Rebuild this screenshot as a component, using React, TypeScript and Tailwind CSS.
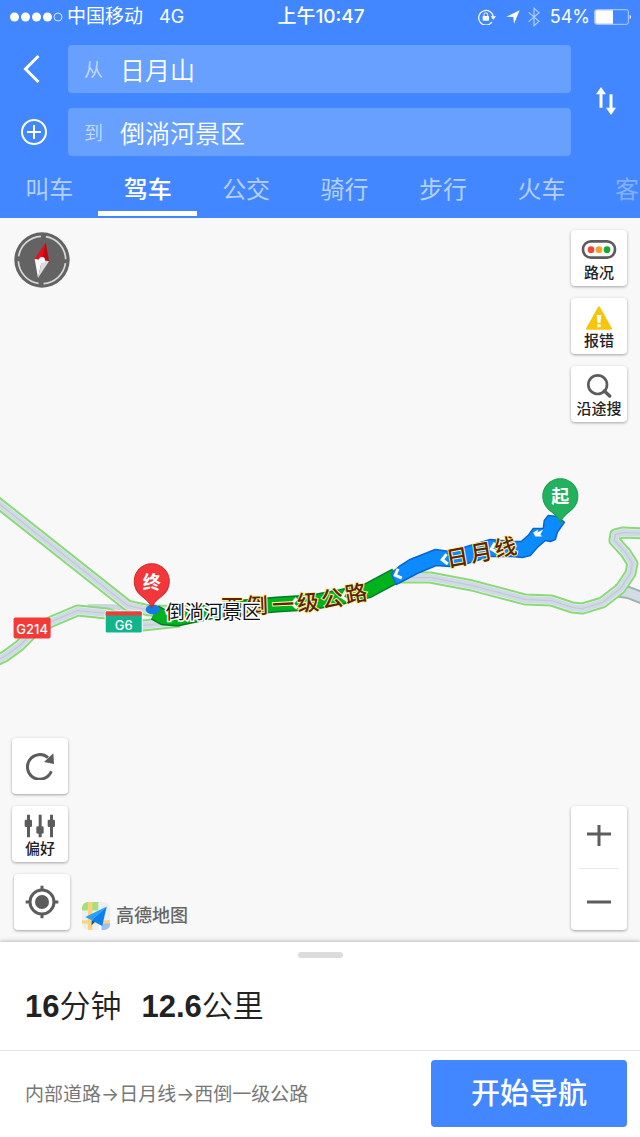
import React, { useState } from "react";

const tabs = ["叫车", "驾车", "公交", "骑行", "步行", "火车"];

const mainRoads = [
  "M-6 499 L128 605 L150 610 L215 611",
  "M-6 661 L5 656 L20 645 L35 630 L52 621 L78 610 L107 613 L143 625 L180 621",
  "M396 577 L430 577 L472 585 L525 599 L551 600 L572 607 L582 608 L602 602 L620 588 L630 573 L632 563 L625 552 L614 540 L615 534 L623 532 L646 533",
];

const greenRoute =
  "M155 612 L164 617 L177 618 L210 611 L243 607 L277 604 L310 602 L343 596 L368 590 L396 575";

const blueRoute =
  "M391 573 L399 566 L410 559 L435 549 L450 551 L470 545 L490 539 L513 541 L521 541 L528 535 L533 528 L543 528 L544 520 L548 515 L557 516 L564 522 L557 532 L555 539 L550 541 L545 540 L537 547 L530 555 L522 557 L512 556 L490 556 L467 563 L450 566 L436 565 L417 573 L402 581 L396 584 Z";

const roadLabels = [
  { t: "西", x: 232, y: 606, r: 0 },
  { t: "倒", x: 257, y: 605, r: -2 },
  { t: "一", x: 283, y: 604, r: -3 },
  { t: "级", x: 308, y: 602, r: -5 },
  { t: "公", x: 332, y: 598, r: -8 },
  { t: "路", x: 356, y: 593, r: -10 },
  { t: "日", x: 457, y: 557, r: -10 },
  { t: "月", x: 481, y: 552, r: -10 },
  { t: "线", x: 505, y: 547, r: -12 },
];

const chevrons = [
  { x: 294, y: 603, r: -3 },
  { x: 344, y: 596, r: -12 },
  { x: 397, y: 574, r: -22 },
  { x: 444, y: 559, r: -8 },
  { x: 493, y: 548, r: -14 },
];

function Pin({ x, y, color, edge, text }: { x: number; y: number; color: string; edge: string; text: string }) {
  return (
    <g transform={`translate(${x} ${y})`}>
      <path
        d="M0 26 C-2 20 -6 18 -11 13.500 A17.500 17.500 0 1 1 11 13.500 C6 18 2 20 0 26 Z"
        fill={color}
        stroke={edge}
        strokeWidth="1"
      />
      <text x="0" y="7" textAnchor="middle" fontSize="18" fontWeight="700" fill="#fff">
        {text}
      </text>
    </g>
  );
}

function RouteMap() {
  return (
    <svg
      className="absolute inset-0 h-full w-full font-['Liberation_Sans','Noto_Sans_CJK_SC',sans-serif]"
      viewBox="0 218 640 723"
      preserveAspectRatio="xMidYMid slice"
    >
      <g fill="none" strokeLinejoin="round">
        <path d="M88 606 L112 606 L150 612" stroke="#ccd6e0" strokeWidth="5" />
        <path d="M614 590 L628 592 L646 599" stroke="#9fb3b2" strokeWidth="13" />
        <path d="M614 590 L628 592 L646 599" stroke="#d3dce6" strokeWidth="9" />
        {mainRoads.map((d) => (
          <path key={d} d={d} stroke="#8bda78" strokeWidth="12" />
        ))}
        {mainRoads.map((d) => (
          <path key={d} d={d} stroke="#eaf3ee" strokeWidth="8" />
        ))}
        {mainRoads.map((d) => (
          <path key={d} d={d} stroke="#d0dae5" strokeWidth="7" />
        ))}
        {mainRoads.map((d) => (
          <path key={d} d={d} stroke="#bfc8d4" strokeWidth="1" />
        ))}
        <path d={greenRoute} stroke="#087a2b" strokeWidth="16" />
        <path d={greenRoute} stroke="#00b31c" strokeWidth="13" />
      </g>
      <path d={blueRoute} fill="#0c8bff" stroke="#0865cf" strokeWidth="1.500" strokeLinejoin="round" />
      <ellipse cx="153" cy="609" rx="7" ry="5" fill="#147be0" />

      {chevrons.map((c) => (
        <path
          key={c.x}
          d="M3 -5 L-2 0 L3 5"
          transform={`translate(${c.x} ${c.y}) rotate(${c.r})`}
          fill="none"
          stroke="#fff"
          strokeWidth="3"
        />
      ))}
      <path d="M533 532 L538 529 L537 532 L543 529 L540 534 L542 536 L535 536 Z" fill="#fff" />

      {roadLabels.map((l) => (
        <text
          key={l.t + l.x}
          transform={`translate(${l.x} ${l.y}) rotate(${l.r})`}
          y="8"
          textAnchor="middle"
          fontSize="22"
          fontWeight="500"
          fill="#5b2309"
          stroke="#fdf0a0"
          strokeWidth="2"
          paintOrder="stroke"
        >
          {l.t}
        </text>
      ))}

      <g
        className="font-['Inter','Liberation_Sans',sans-serif]"
        fontWeight="500"
        fontSize="13"
        fill="#fff"
        textAnchor="middle"
      >
        <rect x="14" y="617" width="37" height="21" rx="2" fill="#f43a36" />
        <text x="32.500" y="633">G214</text>
        <rect x="105" y="610" width="38" height="23" rx="2" fill="#fff" />
        <rect x="106" y="611" width="36" height="21" rx="1" fill="#12b48c" />
        <path d="M106 615 V612 A1 1 0 0 1 107 611 H141 A1 1 0 0 1 142 612 V615 Z" fill="#f43a36" />
        <text x="124" y="629">G6</text>
      </g>

      <Pin x={152} y={581} color="#f2363a" edge="#c92b30" text="终" />
      <Pin x={560} y={496} color="#22b15c" edge="#189c4d" text="起" />
      <text
        x="166"
        y="618"
        fontSize="19"
        fill="#111"
        stroke="#fff"
        strokeWidth="3"
        paintOrder="stroke"
      >
        倒淌河景区
      </text>
    </svg>
  );
}

function Compass() {
  return (
    <svg className="h-15 w-15" viewBox="-90 -90 180 180">
      <circle r="83" fill="#636363" />
      <g fill="none" stroke="#d9d9d9" strokeWidth="5">
        <circle r="71" strokeDasharray="96 15.500" strokeDashoffset="-5" transform="rotate(4)" />
      </g>
      <path d="M11 -53 L-22 -3 L0 0 Z" fill="#e60f1b" />
      <path d="M11 -53 L21 4 L0 0 Z" fill="#c00713" />
      <path d="M-12 54 L-22 -3 L0 0 Z" fill="#fafafa" />
      <path d="M-12 54 L21 4 L0 0 Z" fill="#dcdcdc" />
      <circle r="9" fill="#fff" />
    </svg>
  );
}

function MapButton({ label, name, children }: { label?: string; name: string; children: React.ReactNode }) {
  return (
    <button
      aria-label={name}
      className={
        "flex h-14 w-14 flex-col items-center rounded bg-white text-[15px] leading-[22px] font-medium text-[#222] shadow-[0_1px_3px_rgba(0,0,0,0.35)] " +
        (label ? "pt-2" : "justify-center")
      }
    >
      {children}
      {label && <span className="whitespace-nowrap">{label}</span>}
    </button>
  );
}

function StatusBar() {
  return (
    <div className="grid h-[33px] grid-cols-[1fr_auto_1fr] items-center pr-2 pl-2.5 font-['Inter','Noto_Sans_CJK_SC',sans-serif] text-[19px] leading-6">
      <div className="flex items-center">
        <svg className="mr-1 h-3 w-[53px]" viewBox="0 0 53 12">
          {[4, 15, 26, 37].map((x) => (
            <circle key={x} cx={x + 0.5} cy="6" r="4.500" fill="#fff" />
          ))}
          <circle cx="48" cy="6" r="4" fill="none" stroke="#fff" strokeWidth="0.800" />
        </svg>
        <span>中国移动</span>
        <span className="ml-4 text-[18px]">4G</span>
      </div>
      <span className="font-medium">上午10:47</span>
      <div className="flex items-center justify-end">
        <svg className="h-4 w-[18px]" viewBox="0 0 54 48">
          <path d="M42 39 A22 22 0 1 1 46 24" fill="none" stroke="#fff" strokeWidth="3.500" />
          <path d="M38 22 H54 L46 32 Z" fill="#fff" />
          <rect x="14" y="21" width="19" height="14" rx="2" fill="#fff" />
          <path d="M18 22 V17 A5.500 5.500 0 0 1 29 17 V22" fill="none" stroke="#fff" strokeWidth="3" />
        </svg>
        <svg className="ml-2.5 h-3.5 w-3.5" viewBox="0 0 42 42">
          <path d="M41 1 L1 20 L22 21 L24 41 Z" fill="#fff" />
        </svg>
        <svg className="ml-2 h-5 w-3 opacity-60" viewBox="0 0 36 60">
          <path d="M2 16 L33 43 L18 56 V4 L33 17 L2 44" fill="none" stroke="#fff" strokeWidth="3.500" />
        </svg>
        <span className="ml-2.5 text-[18px]">54%</span>
        <svg className="ml-1 h-4 w-[38px]" viewBox="0 0 114 48">
          <rect x="2" y="2" width="101" height="44" rx="6" fill="none" stroke="#fff" strokeOpacity="0.600" strokeWidth="3" />
          <path d="M8 4 H57 V44 H8 A4 4 0 0 1 4 40 V8 A4 4 0 0 1 8 4 Z" fill="#fff" />
          <path d="M107 17 A8 8 0 0 1 107 31 Z" fill="#fff" />
        </svg>
      </div>
    </div>
  );
}

function PlaceField({
  id,
  label,
  value,
  onChange,
}: {
  id: string;
  label: string;
  value: string;
  onChange: (v: string) => void;
}) {
  return (
    <div className="flex h-12 items-center rounded bg-[#68a0ff] pl-4">
      <label htmlFor={id} className="w-9 shrink-0 pt-1 text-[19px] font-[350] text-[#c6dbff]">
        {label}
      </label>
      <input
        id={id}
        value={value}
        onChange={(e) => onChange(e.target.value)}
        className="h-full w-full min-w-0 bg-transparent text-[25px] font-[350] text-white outline-none"
      />
    </div>
  );
}

export default function App() {
  const [from, setFrom] = useState("日月山");
  const [to, setTo] = useState("倒淌河景区");
  const [active, setActive] = useState("驾车");

  const swap = () => {
    setFrom(to);
    setTo(from);
  };

  return (
    <div className="flex min-h-screen flex-col bg-[#f8f8f8] font-['Liberation_Sans','Noto_Sans_CJK_SC',sans-serif]">
      <header className="bg-[#4287ff] pb-0.5 text-white">
        <StatusBar />
        <div className="flex pt-3">
          <div className="flex w-[68px] flex-col gap-[15px]">
            <button aria-label="返回" className="flex h-12 items-center pl-[22px]">
              <svg className="h-[30px] w-5" viewBox="0 0 20 30">
                <path d="M16.500 2 L3.500 15 L16.500 28" fill="none" stroke="#fff" strokeWidth="3" />
              </svg>
            </button>
            <button aria-label="添加途经点" className="flex h-12 items-center justify-center">
              <svg className="h-7 w-7" viewBox="0 0 28 28" fill="none" stroke="#fff" strokeWidth="2">
                <circle cx="14" cy="14" r="12" />
                <path d="M7 14 H21 M14 7 V21" />
              </svg>
            </button>
          </div>
          <div className="flex min-w-0 flex-1 flex-col gap-[15px]">
            <PlaceField id="from" label="从" value={from} onChange={setFrom} />
            <PlaceField id="to" label="到" value={to} onChange={setTo} />
          </div>
          <button aria-label="交换起终点" onClick={swap} className="flex w-[69px] items-center justify-center">
            <svg className="h-7 w-5" viewBox="0 0 60 84" fill="#fff">
              <path d="M15 0 L30 22 H19.500 V62 H10.500 V22 H0 Z" />
              <path d="M45 84 L60 62 H49.500 V22 H40.500 V62 H30 Z" />
            </svg>
          </button>
        </div>
        <nav className="mt-1 flex">
          {tabs.map((t) => (
            <button
              key={t}
              onClick={() => setActive(t)}
              className={
                "h-14 w-2/13 shrink-0 border-b-[5px] pt-2 text-[24px] " +
                (t === active ? "border-white font-medium text-white" : "border-transparent text-[#b5d0ff]")
              }
            >
              {t}
            </button>
          ))}
          <button
            aria-label="客车"
            onClick={() => setActive("客车")}
            className="h-14 flex-1 border-b-[5px] border-transparent pt-2 pr-px text-right text-[24px] text-[#82b0ff]"
          >
            客
          </button>
        </nav>
      </header>

      <main className="relative flex flex-1 overflow-hidden">
        <RouteMap />
        <div className="relative flex flex-1 justify-between gap-4 py-3 pr-[13px] pl-3">
          <div className="flex flex-col justify-between">
            <Compass />
            <div className="flex flex-col gap-3">
              <MapButton name="刷新">
                <svg className="h-7 w-7" viewBox="0 0 84 84">
                  <path d="M76 58 A37 37 0 1 1 66 17" fill="none" stroke="#5c5c5c" strokeWidth="9" />
                  <path d="M82 4 L84 36 L54 30 Z" fill="#5c5c5c" />
                </svg>
              </MapButton>
              <MapButton name="偏好" label="偏好">
                <svg className="h-6 w-8" viewBox="0 0 96 72" fill="#5c5c5c">
                  <path d="M9 2 H18 V70 H9 Z M44 2 H53 V70 H44 Z M78 2 H87 V70 H78 Z" />
                  <rect x="2" y="17" width="22" height="22" rx="4" />
                  <rect x="37" y="37" width="22" height="22" rx="4" />
                  <rect x="71" y="17" width="22" height="22" rx="4" />
                </svg>
              </MapButton>
              <div className="flex items-end gap-3 pl-0.5">
                <MapButton name="定位">
                  <svg className="h-[34px] w-[34px]" viewBox="-51 -51 102 102">
                    <circle r="36" fill="none" stroke="#5c5c5c" strokeWidth="9" />
                    <path
                      d="M0 -49 V-34 M0 34 V49 M-49 0 H-34 M34 0 H49"
                      stroke="#5c5c5c"
                      strokeWidth="9"
                    />
                    <circle r="21" fill="#5c5c5c" />
                  </svg>
                </MapButton>
                <div className="flex items-center gap-1.5 text-[18px] leading-7 font-medium text-[#666]">
                  <svg className="h-7 w-7" viewBox="0 0 86 86">
                    <clipPath id="tile">
                      <rect width="86" height="86" rx="18" />
                    </clipPath>
                    <g clipPath="url(#tile)">
                      <rect width="86" height="86" fill="#eceff1" />
                      <rect width="50" height="26" fill="#a4e07d" />
                      <rect x="58" y="62" width="28" height="24" fill="#9cc0f8" />
                      <path d="M18 0 H32 V86 H18 Z M0 56 H86 V66 H0 Z" fill="#fdd27a" />
                      <path d="M52 60 H60 V86 H52 Z" fill="#fff" />
                    </g>
                    <path d="M76 14 L10 46 L30 56 Z" fill="#2aa0fb" />
                    <path d="M76 14 L30 56 L62 74 Z" fill="#0a80ee" />
                    <path d="M30 56 L29 72 L40 61 Z" fill="#0955aa" />
                  </svg>
                  高德地图
                </div>
              </div>
            </div>
          </div>

          <div className="flex flex-col justify-between">
            <div className="flex flex-col gap-3">
              <MapButton name="路况" label="路况">
                <svg className="h-6 w-9" viewBox="0 0 108 72">
                  <rect x="6" y="10" width="96" height="49" rx="24" fill="#fff" stroke="#5c5c5c" strokeWidth="8" />
                  <circle cx="30" cy="35" r="10" fill="#f24a32" />
                  <circle cx="54" cy="35" r="10" fill="#f9a02c" />
                  <circle cx="78" cy="35" r="10" fill="#13ad2e" />
                </svg>
              </MapButton>
              <MapButton name="报错" label="报错">
                <svg className="h-6 w-7" viewBox="0 0 84 72">
                  <path
                    d="M42 4 L78 68 H6 Z"
                    fill="#f5c60d"
                    stroke="#f5c60d"
                    strokeWidth="6"
                    strokeLinejoin="round"
                  />
                  <path d="M35 27 H49 L46 51 H38 Z M37 55 H47 V64 H37 Z" fill="#fff" />
                </svg>
              </MapButton>
              <MapButton name="沿途搜" label="沿途搜">
                <svg className="h-6 w-7" viewBox="0 0 84 72" fill="none" stroke="#5c5c5c">
                  <circle cx="38" cy="32" r="28" strokeWidth="8" />
                  <path d="M58 51 L74 66" strokeWidth="10" strokeLinecap="round" />
                </svg>
              </MapButton>
            </div>
            <div className="flex w-14 flex-col items-center rounded bg-white shadow-[0_1px_3px_rgba(0,0,0,0.35)]">
              <button aria-label="放大" className="flex h-[62px] w-full items-center justify-center">
                <svg className="h-6 w-6" viewBox="0 0 24 24" stroke="#5c5c5c" strokeWidth="3">
                  <path d="M0 9 H24 M12 -3 V21" />
                </svg>
              </button>
              <div className="h-px w-10 bg-[#e8e8e8]" />
              <button aria-label="缩小" className="flex h-[61px] w-full items-center justify-center">
                <svg className="h-6 w-6" viewBox="0 0 24 24" stroke="#5c5c5c" strokeWidth="3">
                  <path d="M0 14 H24" />
                </svg>
              </button>
            </div>
          </div>
        </div>
      </main>

      <section className="relative bg-white shadow-[0_-1px_4px_rgba(0,0,0,0.25)]">
        <div className="flex justify-center pt-2.5">
          <div className="h-1.5 w-[45px] rounded-full bg-[#dcdcdc]" />
        </div>
        <div className="flex items-center gap-5 px-[25px] pt-[25px] pb-[19px] text-[31px] leading-[48px] text-[#222]">
          <p>
            <b>16</b>
            <span className="font-[350]">分钟</span>
          </p>
          <p>
            <b>12.6</b>
            <span className="font-[350]">公里</span>
          </p>
        </div>
        <div className="flex items-center justify-between gap-4 border-t border-[#e6e6e6] pt-[9px] pr-[13px] pb-2.5 pl-[25px]">
          <p className="pt-0.5 font-['Inter','Noto_Sans_CJK_SC',sans-serif] text-[19px] leading-6 text-[#777]">
            内部道路→日月线→西倒一级公路
          </p>
          <button className="h-[67px] w-[196px] shrink-0 rounded bg-[#4287ff] pt-0.5 text-[29px] font-medium text-white">
            开始导航
          </button>
        </div>
      </section>
    </div>
  );
}
